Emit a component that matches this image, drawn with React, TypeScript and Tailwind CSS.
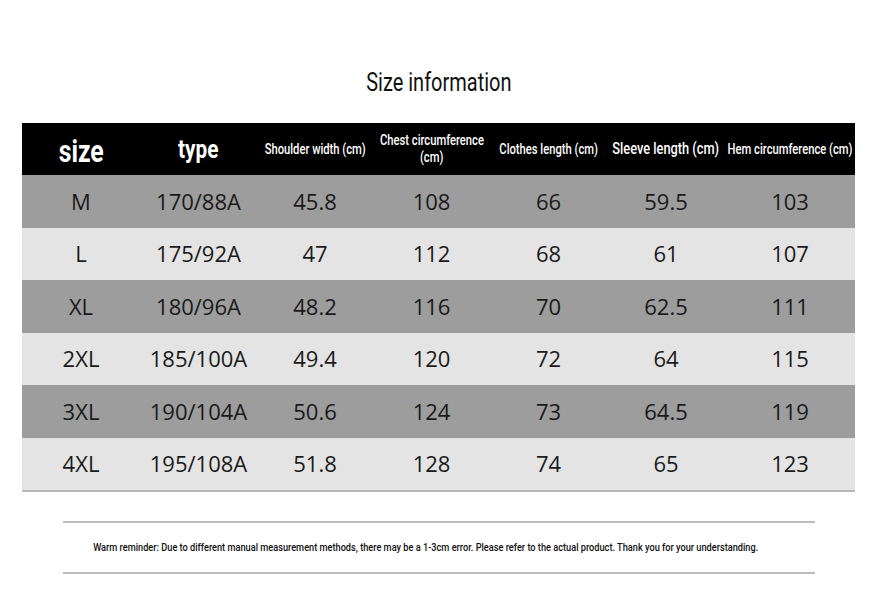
const roboto = { fontFamily: 'Roboto, "Liberation Sans", sans-serif' };

const rows = [
  ["M", "170/88A", "45.8", "108", "66", "59.5", "103"],
  ["L", "175/92A", "47", "112", "68", "61", "107"],
  ["XL", "180/96A", "48.2", "116", "70", "62.5", "111"],
  ["2XL", "185/100A", "49.4", "120", "72", "64", "115"],
  ["3XL", "190/104A", "50.6", "124", "73", "64.5", "119"],
  ["4XL", "195/108A", "51.8", "128", "74", "65", "123"],
];

const cols = "grid grid-cols-[118px_117px_116px_117px_117px_118px_130px]";

// narrow type like the condensed face in the picture
function Narrow({ children, className = "" }: { children: React.ReactNode; className?: string }) {
  return (
    <span className={`inline-block whitespace-nowrap scale-x-[0.8] ${className}`} style={roboto}>
      {children}
    </span>
  );
}

export default function App() {
  return (
    <div className="w-[878px] h-[615px] bg-white overflow-hidden">
      <div className="pt-[67px] h-[123px] flex justify-center">
        <Narrow className="text-[25px] leading-[32px] text-[#111]">Size information</Narrow>
      </div>

      <div className="ml-[22px] w-[833px] border-b-2 border-[#b8b8b8]">
        <div className={`${cols} h-[52px] bg-black text-white items-center text-center font-medium`}>
          <div className="flex justify-center pt-[6px]">
            <Narrow className="text-[31px] font-bold">size</Narrow>
          </div>
          <div className="flex justify-center">
            <Narrow className="text-[26px] font-bold">type</Narrow>
          </div>
          <div className="flex justify-center">
            <Narrow className="text-[14px]">Shoulder width (cm)</Narrow>
          </div>
          <div className="flex flex-col items-center leading-[17px]">
            <Narrow className="text-[14px]">Chest circumference</Narrow>
            <Narrow className="text-[14px]">(cm)</Narrow>
          </div>
          <div className="flex justify-center">
            <Narrow className="text-[14px]">Clothes length (cm)</Narrow>
          </div>
          <div className="flex justify-center">
            <Narrow className="text-[16px]">Sleeve length (cm)</Narrow>
          </div>
          <div className="flex justify-center">
            <Narrow className="text-[14px]">Hem circumference (cm)</Narrow>
          </div>
        </div>
        {rows.map((r, i) => (
          <div
            key={r[0]}
            className={`${cols} h-[52.5px] items-center text-center text-[22px] text-[#1a1a1a] ${
              i % 2 === 0 ? "bg-[#9d9d9d]" : "bg-[#e4e4e4]"
            }`}
            style={{ fontFamily: '"Open Sans", "Noto Sans", sans-serif' }}
          >
            {r.map((c, j) => (
              <div key={j}>{c}</div>
            ))}
          </div>
        ))}
      </div>

      <div className="ml-[63px] w-[752px] mt-[29px] border-y-2 border-[#bdbdbd] h-[53px] pr-[26px] flex items-center justify-center">
        <Narrow className="text-[11.5px] font-medium text-[#111]">
          Warm reminder: Due to different manual measurement methods, there may be a 1-3cm error. Please refer to the
          actual product. Thank you for your understanding.
        </Narrow>
      </div>
    </div>
  );
}
